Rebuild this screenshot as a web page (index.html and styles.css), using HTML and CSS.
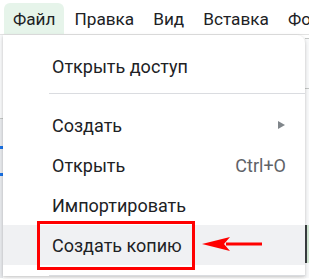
FILE: index.html
```html
<!DOCTYPE html>
<html lang="ru">

<head>
    <meta charset="UTF-8">
    <meta name="viewport" content="width=device-width, initial-scale=1.0">
    <title>Файл — меню</title>
    <link rel="stylesheet" href="styles.css">
</head>

<body>

    <div class="menubar">
        <span class="menubar-item active">Файл</span>
        <span class="menubar-item">Правка</span>
        <span class="menubar-item">Вид</span>
        <span class="menubar-item">Вставка</span>
        <span class="menubar-item">Формат</span>
    </div>

    <div class="sheet">
        <div class="sheet-left">
            <span class="mark mark-a"></span>
            <span class="mark mark-b"></span>
        </div>
        <div class="sheet-right">
            <span class="cell-green"></span>
        </div>
    </div>

    <div class="dropdown">
        <div class="menu-item">Открыть доступ</div>
        <div class="separator first"></div>
        <div class="menu-item">
            <span>Создать</span>
            <span class="submenu-arrow"></span>
        </div>
        <div class="menu-item">
            <span>Открыть</span>
            <span class="shortcut">Ctrl+O</span>
        </div>
        <div class="menu-item">Импортировать</div>
        <div class="menu-item hover">Создать копию</div>
        <div class="separator"></div>
    </div>

    <!-- annotation on top of the screenshot -->
    <div class="callout"></div>
    <svg class="callout-arrow" width="62" height="16" viewBox="0 0 62 16">
        <path d="M24 8 H60" stroke="#ff0000" stroke-width="3" />
        <path d="M0 8 L28 1 L22 8 L28 15 Z" fill="#ff0000" />
    </svg>

</body>

</html>
```

FILE: styles.css
```css
body {
    margin: 0;
    font-family: Roboto, 'Noto Sans', sans-serif;
    background-color: #ffffff;
    color: #202124;
    width: 309px;
    height: 279px;
    overflow: hidden;
    position: relative;
}

.menubar {
    display: flex;
    gap: 1px;
    height: 35px;
    padding: 3px 0 0 4px;
    box-sizing: border-box;
    font-size: 17.2px;
    white-space: nowrap;
    overflow: hidden;
    border-bottom: 1px solid #e3e3e3;
}

.menubar-item {
    padding: 4px 9px 0;
    border-radius: 6px 6px 0 0;
    line-height: 24px;
}

.menubar-item.active {
    background-color: #e6f4ea;
}

.sheet {
    display: flex;
    justify-content: space-between;
    height: 243px;
}

.sheet-left {
    position: relative;
    width: 3px;
    background: linear-gradient(#f8f9fa 0, #f8f9fa 83px, #c4c7c5 83px, #c4c7c5 84px, #e8eaed 84px);
}

.mark {
    position: absolute;
    left: 0;
    width: 3px;
    height: 3px;
    background-color: #1a73e8;
}

.mark-a {
    top: 111px;
}

.mark-b {
    top: 138px;
}

.sheet-right {
    position: relative;
    width: 4px;
    background: linear-gradient(#ffffff 0, #ffffff 3px, #c4c7c5 3px, #c4c7c5 4px, #f8f9fa 4px, #f8f9fa 53px, #c4c7c5 53px, #c4c7c5 54px, #f8f9fa 54px);
}

.cell-green {
    position: absolute;
    top: 190px;
    left: 0;
    width: 4px;
    height: 38px;
    background-color: #d3e8d5;
    border-left: 2px solid #3c4043;
    box-sizing: border-box;
}

.dropdown {
    position: absolute;
    top: 35px;
    left: 3px;
    width: 302px;
    padding-top: 11px;
    background: #ffffff;
    border-radius: 0 8px 0 0;
    box-shadow: 0 1px 3px rgba(0, 0, 0, 0.18), 0 2px 6px rgba(0, 0, 0, 0.08);
    font-size: 18px;
}

.menu-item {
    display: flex;
    justify-content: space-between;
    align-items: center;
    height: 40px;
    padding: 0 19px 0 49px;
    white-space: nowrap;
}

.menu-item.hover {
    background-color: #f0f1f3;
}

.shortcut {
    color: #5f6368;
}

.submenu-arrow {
    width: 0;
    height: 0;
    margin-right: 1px;
    border-top: 4px solid transparent;
    border-bottom: 4px solid transparent;
    border-left: 7px solid #80868b;
}

.separator {
    height: 1px;
    margin: 10px 0 0 46px;
    background-color: #dadce0;
}

.separator.first {
    margin: 7px 0 11px 46px;
}

.callout {
    position: absolute;
    top: 221px;
    left: 37px;
    width: 158px;
    height: 49px;
    border: 3px solid #ff0000;
    box-sizing: border-box;
}

.callout-arrow {
    position: absolute;
    top: 236px;
    left: 202px;
}
```
